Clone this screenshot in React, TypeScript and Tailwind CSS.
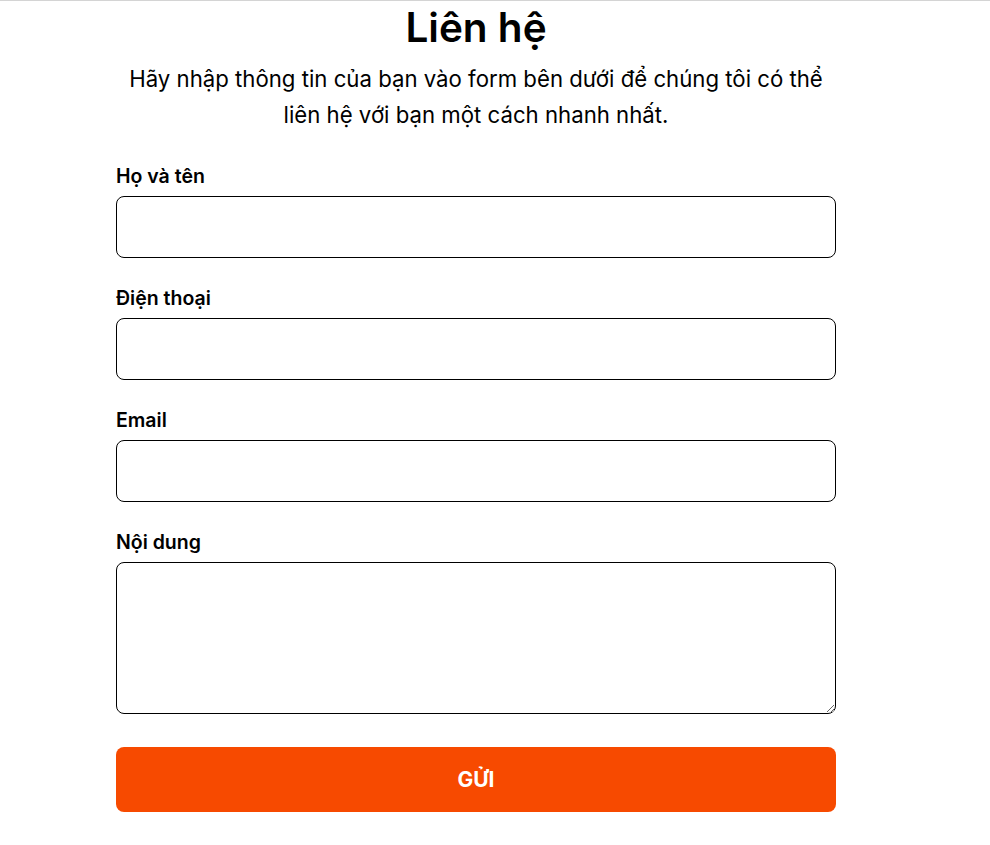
import React, { useState } from 'react';

export default function App() {
  const [form, setForm] = useState({ name: '', phone: '', email: '', message: '' });

  const update = (key: keyof typeof form) => (e: React.ChangeEvent<HTMLInputElement | HTMLTextAreaElement>) =>
    setForm((prev) => ({ ...prev, [key]: e.target.value }));

  const fields: Array<{ key: keyof typeof form; label: string; type: string }> = [
    { key: 'name', label: 'Họ và tên', type: 'text' },
    { key: 'phone', label: 'Điện thoại', type: 'tel' },
    { key: 'email', label: 'Email', type: 'email' },
  ];

  return (
    <div className="min-h-[845px] bg-white border-t border-[#d4d4d4] font-['Inter',sans-serif] text-black">
      <main className="w-[952px] pt-[3px] pb-8">
        <h1 className="text-center text-[40.5px] leading-[48px] font-semibold">Liên hệ</h1>
        <p className="mx-auto mt-[9px] max-w-[700px] text-center text-[22.2px] leading-[36px]">
          Hãy nhập thông tin của bạn vào form bên dưới để chúng tôi có thể liên hệ với bạn một cách nhanh nhất.
        </p>

        <form className="mx-auto mt-[31px] w-[720px]" onSubmit={(e) => e.preventDefault()}>
          {fields.map((f) => (
            <div key={f.key} className="mb-[28px]">
              <label className="block text-[19.5px] leading-[24px] font-semibold mb-[8px]">{f.label}</label>
              <input
                type={f.type}
                value={form[f.key]}
                onChange={update(f.key)}
                className="block w-full h-[62px] rounded-lg border border-black px-4 text-[18px] outline-none"
              />
            </div>
          ))}
          <div className="mb-[33px]">
            <label className="block text-[19.5px] leading-[24px] font-semibold mb-[8px]">Nội dung</label>
            <textarea
              value={form.message}
              onChange={update('message')}
              className="block w-full h-[152px] rounded-lg border border-black px-4 py-3 text-[18px] outline-none"
            />
          </div>
          <button
            type="submit"
            className="block w-full h-[65px] rounded-lg bg-[#f74a00] text-white text-[21px] font-bold"
          >
            GỬI
          </button>
        </form>
      </main>
    </div>
  );
}
